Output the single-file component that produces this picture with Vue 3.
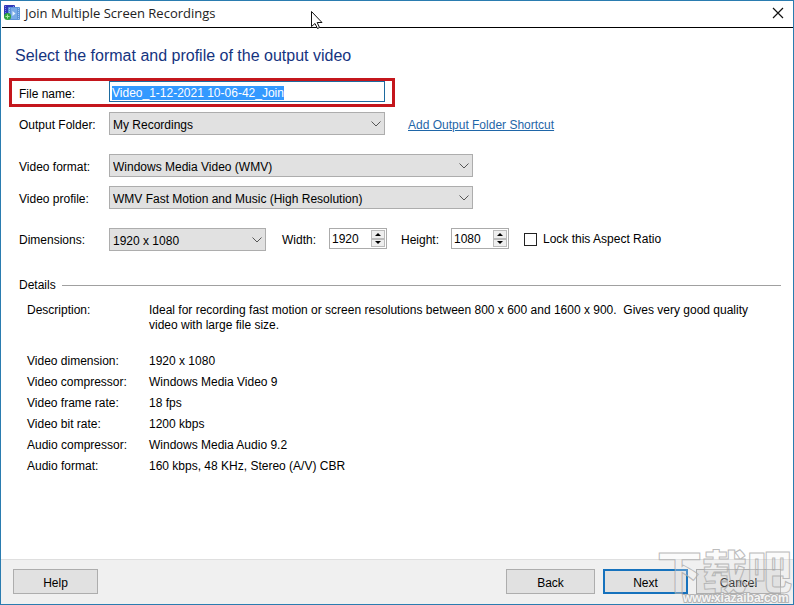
<script setup>
import { onMounted, ref } from 'vue'

const fileName = ref('Video_1-12-2021 10-06-42_Join')
const fileInput = ref(null)
const width = ref(1920)
const height = ref(1080)
const locked = ref(false)

const details = [
  ['Video dimension:', '1920 x 1080'],
  ['Video compressor:', 'Windows Media Video 9'],
  ['Video frame rate:', '18 fps'],
  ['Video bit rate:', '1200 kbps'],
  ['Audio compressor:', 'Windows Media Audio 9.2'],
  ['Audio format:', '160 kbps, 48 KHz, Stereo (A/V) CBR'],
]

onMounted(() => {
  fileInput.value.focus()
  fileInput.value.select()
})
</script>

<template>
  <div class="window">
    <header class="titlebar">
      <svg class="app-icon" width="16" height="16" viewBox="0 0 16 16" aria-hidden="true">
        <rect x="0" y="0" width="11" height="13" rx="1" fill="#3038b8" />
        <path d="M1.500 1v11M9.500 1v2" stroke="#7f86e8" stroke-dasharray="1 1" />
        <rect x="4" y="2" width="12" height="13" rx="1" fill="#5b93d8" />
        <path d="M5.500 3v11M14.500 3v11" stroke="#a4c8f0" stroke-dasharray="1 1" />
        <rect x="7" y="3" width="6" height="11" fill="#78aae6" />
        <path d="M8.500 6l3 2.500-3 2.500z" fill="#e4f1fd" />
        <circle cx="3.500" cy="11.500" r="3.500" fill="#2fa53a" />
        <path d="M3.500 9.500v4M1.500 11.500h4" stroke="#a5e6a0" />
      </svg>
      <span class="title">Join Multiple Screen Recordings</span>
      <button class="close" type="button" aria-label="Close">
        <svg width="12" height="12" viewBox="0 0 12 12"><path d="M1 1l10 10M11 1L1 11" stroke="#111" stroke-width="1.200" /></svg>
      </button>
    </header>

    <main class="content">
      <h1>Select the format and profile of the output video</h1>

      <form class="form" @submit.prevent>
        <div class="row highlighted">
          <label for="file">File name:</label>
          <input id="file" ref="fileInput" v-model="fileName" class="text" type="text" spellcheck="false" />
        </div>

        <div class="row folder">
          <label for="folder">Output Folder:</label>
          <span class="combo medium">
            <select id="folder"><option>My Recordings</option></select>
            <svg class="chevron" width="10" height="6" viewBox="0 0 10 6"><path d="M.5.5L5 5 9.500.5" /></svg>
          </span>
          <a href="#">Add Output Folder Shortcut</a>
        </div>

        <div class="row format">
          <label for="format">Video format:</label>
          <span class="combo wide">
            <select id="format"><option>Windows Media Video (WMV)</option></select>
            <svg class="chevron" width="10" height="6" viewBox="0 0 10 6"><path d="M.5.5L5 5 9.500.5" /></svg>
          </span>
        </div>

        <div class="row profile">
          <label for="profile">Video profile:</label>
          <span class="combo wide">
            <select id="profile"><option>WMV Fast Motion and Music (High Resolution)</option></select>
            <svg class="chevron" width="10" height="6" viewBox="0 0 10 6"><path d="M.5.5L5 5 9.500.5" /></svg>
          </span>
        </div>

        <div class="row dimensions">
          <label for="dims">Dimensions:</label>
          <span class="combo small">
            <select id="dims"><option>1920 x 1080</option></select>
            <svg class="chevron" width="10" height="6" viewBox="0 0 10 6"><path d="M.5.5L5 5 9.500.5" /></svg>
          </span>
          <label class="size-label" for="w">Width:</label>
          <span class="spinner">
            <input id="w" v-model.number="width" type="text" />
            <span class="steps">
              <button type="button" aria-label="Increase width" @click="width++"><svg width="6" height="3" viewBox="0 0 6 3"><path d="M0 3L3 0l3 3z" /></svg></button>
              <button type="button" aria-label="Decrease width" @click="width--"><svg width="6" height="3" viewBox="0 0 6 3"><path d="M0 0h6L3 3z" /></svg></button>
            </span>
          </span>
          <label class="size-label" for="h">Height:</label>
          <span class="spinner">
            <input id="h" v-model.number="height" type="text" />
            <span class="steps">
              <button type="button" aria-label="Increase height" @click="height++"><svg width="6" height="3" viewBox="0 0 6 3"><path d="M0 3L3 0l3 3z" /></svg></button>
              <button type="button" aria-label="Decrease height" @click="height--"><svg width="6" height="3" viewBox="0 0 6 3"><path d="M0 0h6L3 3z" /></svg></button>
            </span>
          </span>
          <label class="lock"><input v-model="locked" type="checkbox" />Lock this Aspect Ratio</label>
        </div>
      </form>

      <section class="details">
        <h2>Details</h2>
        <dl>
          <div class="description">
            <dt>Description:</dt>
            <dd>Ideal for recording fast motion or screen resolutions between 800 x 600 and 1600 x 900.&nbsp; Gives very good quality video with large file size.</dd>
          </div>
          <div v-for="[name, value] in details" :key="name">
            <dt>{{ name }}</dt>
            <dd>{{ value }}</dd>
          </div>
        </dl>
      </section>
    </main>

    <footer class="actions">
      <button class="help" type="button">Help</button>
      <button class="back" type="button">Back</button>
      <button class="next" type="button">Next</button>
      <button class="cancel" type="button">Cancel</button>
    </footer>

    <svg class="watermark" width="136" height="58" viewBox="0 0 136 58" aria-hidden="true">
      <text class="mark-name" x="0" y="43">下载吧</text>
      <text class="mark-url" x="26" y="56">www.xiazaiba.com</text>
    </svg>
    <svg class="pointer" width="13" height="20" viewBox="0 0 13 20" aria-hidden="true">
      <path d="M1.500 1.500v15l3.500-3 2.500 5 2-1-2.300-5h4.800z" fill="#fff" stroke="#111" />
    </svg>
  </div>
</template>

<style>
body {
  margin: 0;
}
</style>

<style scoped>
* {
  box-sizing: border-box;
}

.window {
  position: relative;
  display: flex;
  flex-direction: column;
  min-height: 100vh;
  overflow: hidden;
  border: 1px solid #2a7cb0;
  background: #fff;
  color: #000;
  font: 12px/15px "Liberation Sans", Arial, "Noto Sans CJK SC", sans-serif;
}

.titlebar {
  display: flex;
  align-items: center;
  gap: 5px;
  height: 27px;
  margin-left: 1px;
  padding: 0 7px 2px 2px;
  border-bottom: 1px solid #000;
}

.title {
  flex: 1;
  color: #222;
  font: 13px/16px "Open Sans", "Noto Sans", sans-serif;
}

.close {
  display: flex;
  padding: 2px;
  border: 0;
  background: none;
}

.content {
  flex: 1;
  padding: 18px 12px 0 8px;
}

h1 {
  margin: 0 0 12px 6px;
  color: #15347f;
  font-size: 16px;
  font-weight: 400;
  line-height: 20px;
}

.row {
  display: flex;
  align-items: center;
  padding-left: 10px;
}

.row > label:first-child {
  flex: 0 0 90px;
}

.row > label,
.row > a {
  padding-top: 4px;
}

.row.highlighted {
  width: 386px;
  height: 29px;
  padding: 0 7px;
  border: 3px solid #c4161c;
}

.text {
  flex: 1;
  align-self: flex-start;
  min-width: 0;
  height: 21px;
  padding: 2px 2px 0;
  border: 1px solid #1d6a9f;
  outline: 0;
  background: #fff;
  font: inherit;
}

.text::selection {
  background: #3399ff;
  color: #fff;
}

.folder {
  margin-top: 5px;
}

.format {
  margin-top: 19px;
}

.profile {
  margin-top: 9px;
}

.dimensions {
  margin-top: 19px;
}

.row.dimensions > label {
  padding-top: 2px;
}

.combo {
  display: grid;
  align-items: center;
}

.combo > * {
  grid-area: 1 / 1;
}

.medium {
  width: 276px;
}

.wide {
  width: 364px;
}

.small {
  width: 157px;
}

select {
  width: 100%;
  height: 23px;
  padding: 4px 20px 0 3px;
  appearance: none;
  border: 1px solid #adadad;
  border-radius: 0;
  background: #e1e1e1;
  color: #000;
  font: inherit;
}

.chevron {
  justify-self: end;
  margin-right: 4px;
  fill: none;
  stroke: #555;
  pointer-events: none;
}

a {
  margin-left: 23px;
  color: #1f66a8;
}

.size-label {
  margin-left: 16px;
  flex: 0 0 47px;
}

.spinner + .size-label {
  margin-left: 14px;
  flex-basis: 50px;
}

.spinner {
  display: flex;
  align-self: flex-start;
  width: 58px;
  height: 21px;
  padding: 1px;
  border: 1px solid #ababab;
}

.spinner input {
  flex: 1;
  min-width: 0;
  padding: 2px 1px 0;
  border: 0;
  font: inherit;
}

.steps {
  display: grid;
  flex: 0 0 14px;
  grid-template-rows: 1fr 1fr;
}

.steps button {
  display: flex;
  align-items: center;
  justify-content: center;
  min-height: 0;
  padding: 0;
  border: 1px solid #bbb;
  background: #eee;
}

.lock {
  display: flex;
  align-items: center;
  gap: 6px;
  margin-left: 15px;
}

.row.dimensions > .lock {
  padding-top: 0;
}

.lock input {
  width: 13px;
  height: 13px;
  margin: 0;
  appearance: none;
  border: 1px solid #222;
  background: #fff;
}

.lock input:checked {
  background: #222;
}

.details {
  margin-top: 27px;
  padding-left: 10px;
}

h2 {
  display: flex;
  align-items: center;
  gap: 6px;
  margin: 0;
  font-size: 12px;
  font-weight: 400;
}

h2::after {
  content: "";
  flex: 1;
  height: 1px;
  background: #a0a0a0;
}

dl {
  margin: 10px 0 0;
  padding: 0 10px 0 8px;
}

dl > div {
  display: grid;
  grid-template-columns: 122px 1fr;
  min-height: 21px;
}

dl > .description {
  min-height: 51px;
}

dd {
  margin: 0;
}

.actions {
  display: flex;
  gap: 8px;
  padding: 9px 12px 10px;
  border-top: 1px solid #dfdfdf;
  background: #f0f0f0;
}

.actions button {
  width: 85px;
  height: 25px;
  padding: 3px 0 0;
  border: 1px solid #adadad;
  background: #e1e1e1;
  color: #000;
  font: inherit;
}

.actions .help {
  margin-right: auto;
}

.actions .back {
  width: 89px;
}

.actions .next {
  border: 2px solid #1672bd;
}

.watermark {
  position: absolute;
  right: 0;
  bottom: 0;
  overflow: visible;
  pointer-events: none;
}

.mark-name {
  fill: rgb(240 240 240 / 25%);
  stroke: rgb(170 170 170 / 80%);
  font: 900 45px "Noto Sans CJK SC", sans-serif;
}

.mark-url {
  fill: #f4f4f4;
  stroke: #b4b4b4;
  paint-order: stroke;
  stroke-width: 2px;
  font: 700 12px "Liberation Sans", sans-serif;
}

.pointer {
  position: absolute;
  top: 9px;
  left: 309px;
  pointer-events: none;
}
</style>
